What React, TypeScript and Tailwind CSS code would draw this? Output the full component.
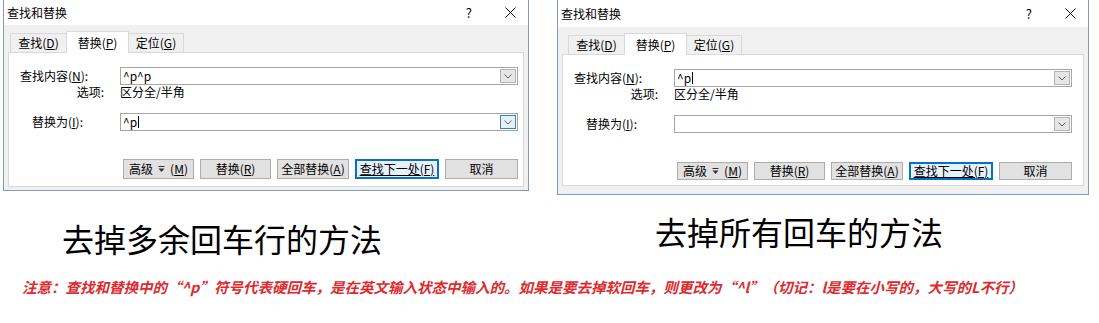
import React from 'react';

interface DialogProps {
  width: string;
  titleH: string;
  tabPl: string;
  btnGap: string;
  btnH: string;
  bottomPad: string;
  panelPb: string;
  find: string;
  replace: string;
  caretOn: 'find' | 'replace';
  replaceFocused?: boolean;
}

const Chevron = () => (
  <svg width="8" height="5" viewBox="0 0 8 5">
    <path d="M0.5 0.5L4 4L7.5 0.5" fill="none" stroke="#606060" strokeWidth="1" />
  </svg>
);

const Caret = () => <span className="ml-px inline-block h-[12px] w-px bg-black align-middle" />;

const Combo = ({ text, caret, focused }: { text: string; caret?: boolean; focused?: boolean }) => (
  <div className="flex h-[18px] w-[398px] items-center border border-[#a6a6a6] bg-white pl-[2px] pr-px">
    <span className="flex flex-1 items-center text-[12px] leading-none">
      {text}
      {caret && <Caret />}
    </span>
    <div
      className={
        focused
          ? 'flex h-[14px] w-[16px] items-center justify-center border border-[#3c7fb1] bg-[#e5f1fb]'
          : 'flex h-[14px] w-[16px] items-center justify-center border border-[#b4b4b4] bg-[#e6e6e6]'
      }
    >
      <Chevron />
    </div>
  </div>
);

const Btn = ({ w, h, children, primary }: { w: string; h: string; children: React.ReactNode; primary?: boolean }) => (
  <div
    className={`${w} ${h} flex items-center justify-center text-[12px] leading-none ${
      primary ? 'border-2 border-[#0b6fc1] bg-[#e5f1fb]' : 'border border-[#adadad] bg-[#e1e1e1]'
    }`}
  >
    {children}
  </div>
);

const Dialog = (p: DialogProps) => (
  <div className={`${p.width} flex flex-col border-x border-b border-[#7f9bbe] bg-[#f0f0f0] text-black`}>
    {/* title bar */}
    <div className={`${p.titleH} flex items-center bg-white pl-[3px] pr-[12px] text-[12px] leading-none`}>
      <span>查找和替换</span>
      <span className="ml-auto text-[13px]">?</span>
      <svg className="ml-[33px]" width="11" height="11" viewBox="0 0 11 11">
        <path d="M0.5 0.5L10.5 10.5M10.5 0.5L0.5 10.5" stroke="#111" strokeWidth="1" />
      </svg>
    </div>

    <div className={`px-[4px] pt-[7px] ${p.bottomPad}`}>
      {/* tabs */}
      <div className={`flex h-[20px] items-end text-[12px] leading-none ${p.tabPl}`}>
        <div className="flex h-[19px] w-[57px] items-center justify-center border border-b-0 border-[#d9d9d9] bg-[#f0f0f0]">
          查找(<u>D</u>)
        </div>
        <div className="relative z-10 -mb-px -ml-px flex h-[22px] w-[63px] items-center justify-center border border-b-0 border-[#d9d9d9] bg-white">
          替换(<u>P</u>)
        </div>
        <div className="-ml-px flex h-[19px] w-[56px] items-center justify-center border border-b-0 border-[#d9d9d9] bg-[#f0f0f0]">
          定位(<u>G</u>)
        </div>
      </div>

      {/* panel */}
      <div className={`border border-[#d9d9d9] bg-white pt-[14px] text-[12px] leading-none ${p.panelPb}`}>
        <div className="flex h-[18px] items-center">
          <div className="w-[111px] pl-[11px]">
            查找内容(<u>N</u>):
          </div>
          <Combo text={p.find} caret={p.caretOn === 'find'} />
        </div>
        <div className="flex h-[14px] items-center">
          <div className="w-[111px] pr-[16px] text-right">选项:</div>
          <div>区分全/半角</div>
        </div>
        <div className="mt-[14px] flex h-[18px] items-center">
          <div className="w-[111px] pl-[23px]">
            替换为(<u>I</u>):
          </div>
          <Combo text={p.replace} caret={p.caretOn === 'replace'} focused={p.replaceFocused} />
        </div>
        <div className={`flex pl-[114px] ${p.btnGap}`}>
          <Btn w="w-[71px]" h={p.btnH}>
            高级
            <svg className="mx-[5px]" width="7" height="8" viewBox="0 0 7 8">
              <path d="M0.5 1.5H6.5" stroke="#333" strokeWidth="1" />
              <path d="M0.5 3.5H6.5L3.5 7Z" fill="#333" />
            </svg>
            (<u>M</u>)
          </Btn>
          <div className="w-[6px]" />
          <Btn w="w-[71px]" h={p.btnH}>
            替换(<u>R</u>)
          </Btn>
          <div className="w-[6px]" />
          <Btn w="w-[72px]" h={p.btnH}>
            全部替换(<u>A</u>)
          </Btn>
          <div className="w-[6px]" />
          <Btn w="w-[84px]" h={p.btnH} primary>
            <span className="underline">查找下一处(F)</span>
          </Btn>
          <div className="w-[6px]" />
          <Btn w="w-[73px]" h={p.btnH}>
            取消
          </Btn>
        </div>
      </div>
    </div>
  </div>
);

export default function App() {
  return (
    <div className="h-[323px] w-[1099px] overflow-hidden bg-white font-['Noto_Sans_CJK_SC',sans-serif]">
      <div className="flex">
        <div className="ml-[3px]">
          <Dialog
            width="w-[526px]"
            titleH="h-[25px]"
            tabPl="pl-[2px]"
            btnGap="mt-[28px]"
            btnH="h-[20px]"
            bottomPad="pb-[3px]"
            panelPb="pb-[7px]"
            find="^p^p"
            replace="^p"
            caretOn="replace"
            replaceFocused
          />
          <p className="ml-[59px] mt-[31px] text-[32px] leading-none text-black">去掉多余回车行的方法</p>
        </div>
        <div className="ml-[28px]">
          <Dialog
            width="w-[532px]"
            titleH="h-[27px]"
            tabPl="pl-[6px]"
            btnGap="mt-[29px]"
            btnH="h-[18px]"
            bottomPad="pb-[8px]"
            panelPb="pb-[5px]"
            find="^p"
            replace=""
            caretOn="find"
          />
          <p className="ml-[98px] mt-[20px] text-[32px] leading-none text-black">去掉所有回车的方法</p>
        </div>
      </div>
      <p className="ml-[22px] mt-[26px] text-[14.5px] font-bold italic leading-none text-[#dc2a30]">
        注意：查找和替换中的“^p”符号代表硬回车，是在英文输入状态中输入的。如果是要去掉软回车，则更改为“^l”（切记：l是要在小写的，大写的L不行）
      </p>
    </div>
  );
}
